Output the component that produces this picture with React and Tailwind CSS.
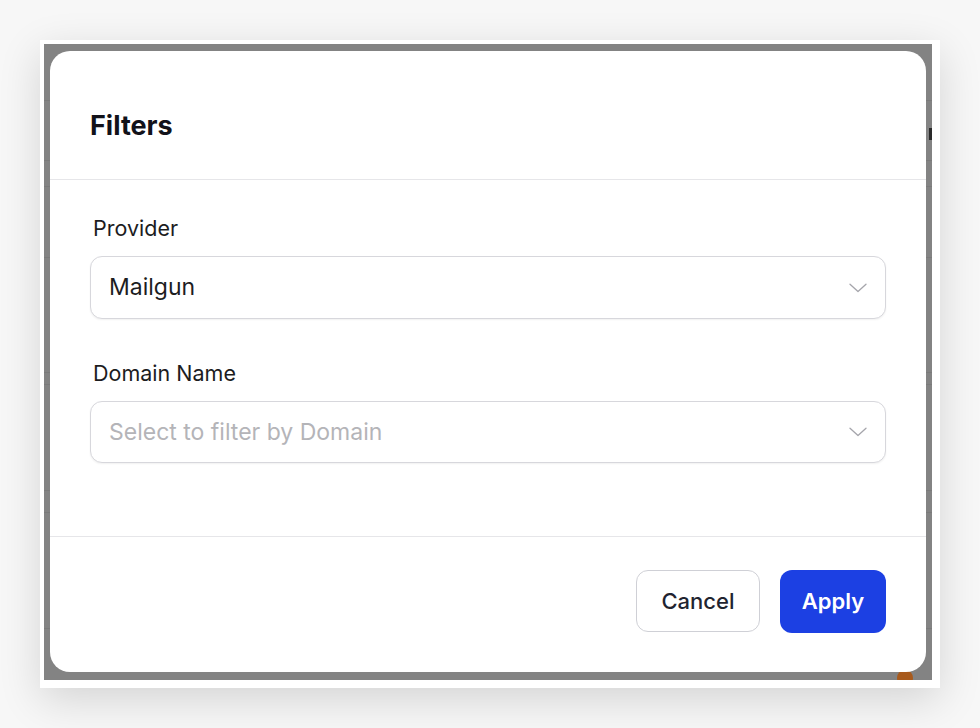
const FONT = "font-['Inter','Liberation_Sans',sans-serif]";

// faint rows of the page that sits under the overlay
const ROW_LINES = [56, 116, 142, 213, 328, 340, 446, 468, 584];

function Chevron() {
  return (
    <svg width="18" height="10" viewBox="0 0 18 10" fill="none" className="text-[#a5a5ab]">
      <path d="M1 1.2 L9 8.6 L17 1.2" stroke="currentColor" strokeWidth="1.3" strokeLinecap="round" strokeLinejoin="round" />
    </svg>
  );
}

function SelectField({ label, value, placeholder, gap, height = 'h-[63px]' }) {
  return (
    <div className={gap}>
      <label className="block pl-[3px] text-[21.5px] leading-[28px] text-[#1c1c1e]">
        {label}
      </label>
      <div className={`mt-[14px] flex ${height} items-center justify-between rounded-[12px] border border-[#d7d7dc] bg-white pl-[18px] pr-[18px] shadow-[0_1px_2px_rgba(0,0,0,0.06)]`}>
        {value ? (
          <span className="text-[23px] text-[#1d1d1f]">{value}</span>
        ) : (
          <span className="text-[23px] text-[#b4b4b8]">{placeholder}</span>
        )}
        <Chevron />
      </div>
    </div>
  );
}

export default function App() {
  return (
    <div className={`${FONT} h-[728px] w-[980px] bg-[#f7f7f7] pl-[40px] pt-[40px]`}>
      {/* screenshot frame */}
      <div className="h-[648px] w-[900px] bg-white pb-[8px] pl-[4px] pr-[8px] pt-[4px] shadow-[0_12px_40px_rgba(0,0,0,0.14)]">
        {/* dimmed backdrop */}
        <div className="relative h-full w-full overflow-hidden bg-[#838383] pb-[8px] pl-[6px] pr-[6px] pt-[7px]">
          {ROW_LINES.map((y) => (
            <div
              key={y}
              className="absolute left-0 right-0 h-px bg-[#7a7a7a]"
              style={{ top: y }}
            />
          ))}
          <div className="absolute right-0 top-[84px] h-[12px] w-[3px] bg-[#2a2a2a]" />
          <div className="absolute bottom-[-6px] right-[19px] h-[16px] w-[16px] rounded-full bg-[#a85a1c]" />

          {/* modal */}
          <div className="relative flex h-full flex-col rounded-[20px] bg-white">
            <div className="h-[129px] border-b border-[#e6e6e9] px-10 pt-[59px]">
              <h2 className="text-[27px] font-bold leading-8 text-[#12121a]">Filters</h2>
            </div>

            <div className="h-[356px] px-10 pt-[34px]">
              <SelectField label="Provider" value="Mailgun" />
              <SelectField
                label="Domain Name"
                placeholder="Select to filter by Domain"
                gap="mt-[40px]"
                height="h-[62px]"
              />
            </div>

            <div className="flex flex-1 items-start justify-end gap-5 border-t border-[#e6e6e9] px-10 pt-[33px]">
              <button className="h-[62px] w-[124px] rounded-[12px] border border-[#cfd0d6] bg-white text-[22px] font-medium text-[#1f2430]">
                Cancel
              </button>
              <button className="h-[63px] w-[106px] rounded-[12px] bg-[#1c40e3] text-[22px] font-semibold text-white">
                Apply
              </button>
            </div>
          </div>
        </div>
      </div>
    </div>
  );
}
